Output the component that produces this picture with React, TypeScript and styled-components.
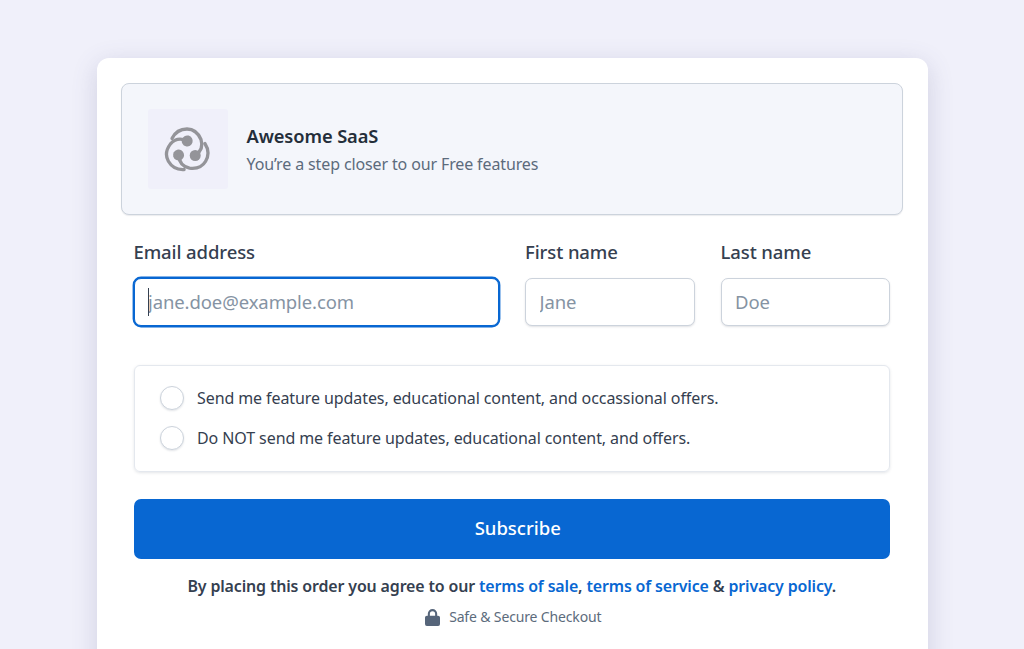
import React from "react";
import styled, { createGlobalStyle } from "styled-components";

const GlobalStyle = createGlobalStyle`
  html, body {
    margin: 0;
    padding: 0;
    height: 100%;
    overflow: hidden;
    background: #f0f0fa;
  }
  * {
    box-sizing: border-box;
  }
`;

const Page = styled.div`
  height: 649px;
  overflow: hidden;
  padding: 58px 96px 0 96.5px;
  background: #f0f0fa;
  font-family: "Noto Sans", "Open Sans", sans-serif;
`;

const Card = styled.main`
  height: 640px;
  padding: 24.5px 25px 0 24.5px;
  background: #fff;
  border-radius: 12px;
  box-shadow: 0 6px 26px rgba(80, 80, 130, 0.2);
`;

const Header = styled.header`
  display: flex;
  align-items: center;
  gap: 18.5px;
  height: 132.5px;
  padding: 0 26px;
  background: #f4f6fb;
  border: 1px solid #ccd3dc;
  border-radius: 8px;
  box-shadow: 0 1px 1px rgba(60, 70, 90, 0.1);
`;

const LogoBox = styled.div`
  display: flex;
  align-items: center;
  justify-content: center;
  width: 80px;
  height: 80px;
  background: #f0f0fa;
  border-radius: 3px;
`;

const Product = styled.div`
  display: flex;
  flex-direction: column;
  gap: 6px;
  padding-top: 3px;
`;

const ProductName = styled.h1`
  margin: 0;
  font-size: 18.3px;
  line-height: 22px;
  font-weight: 600;
  letter-spacing: -0.1px;
  color: #242e3a;
`;

const ProductNote = styled.p`
  margin: 0;
  font-size: 16px;
  line-height: 22px;
  letter-spacing: -0.13px;
  color: #5c6b7c;
`;

const Form = styled.form`
  display: flex;
  flex-direction: column;
  padding: 0 13px 0 12.5px;
`;

const Fields = styled.div`
  display: grid;
  grid-template-columns: 365.5px 169.5px 169.5px;
  column-gap: 26px;
  margin-top: 25px;
`;

const Field = styled.label`
  display: flex;
  flex-direction: column;
  gap: 14px;
`;

const FieldLabel = styled.span`
  font-size: 18.5px;
  line-height: 24px;
  font-weight: 500;
  letter-spacing: -0.1px;
  color: #354050;
`;

const InputWrap = styled.span`
  position: relative;
  display: block;
`;

const Input = styled.input<{ $focused?: boolean }>`
  display: block;
  width: 100%;
  height: 48px;
  padding: 0 13.5px 2px;
  font-family: inherit;
  font-size: 18.5px;
  letter-spacing: -0.1px;
  color: #354050;
  background: #fff;
  outline: none;
  border: 1px solid ${(p) => (p.$focused ? "#0867d2" : "#ccd3dc")};
  border-radius: 7px;
  box-shadow: ${(p) =>
    p.$focused ? "0 0 0 1.4px #0867d2" : "0 1px 2px rgba(60, 70, 90, 0.16)"};

  &::placeholder {
    color: #8593a3;
    opacity: 1;
  }
`;

const Caret = styled.i`
  position: absolute;
  left: 14px;
  top: 10px;
  width: 1.3px;
  height: 28px;
  background: #354050;
`;

const Options = styled.fieldset`
  display: flex;
  flex-direction: column;
  gap: 16px;
  height: 107px;
  margin: 39px 0 0;
  padding: 20px 25.5px 0;
  border: 1px solid #e4e8ee;
  border-radius: 6px;
  box-shadow: 0 1px 3px rgba(60, 70, 90, 0.14);
`;

const Option = styled.label`
  display: flex;
  align-items: center;
  gap: 13px;
  height: 24px;
  font-size: 16px;
  letter-spacing: -0.09px;
  color: #354050;
`;

const Radio = styled.input`
  appearance: none;
  flex: none;
  width: 24px;
  height: 24px;
  margin: 0;
  background: #fff;
  border: 1px solid #ccd3dc;
  border-radius: 50%;
  box-shadow: 0 1px 2px rgba(60, 70, 90, 0.14);
`;

const SubmitButton = styled.button`
  height: 60px;
  margin-top: 27px;
  padding: 0 0 3px 12px;
  font-family: inherit;
  font-size: 18.5px;
  font-weight: 500;
  color: #fff;
  background: #0867d2;
  border: none;
  border-radius: 7px;
`;

const Terms = styled.p`
  margin: 15px 0 0;
  text-align: center;
  font-size: 15.95px;
  line-height: 24px;
  font-weight: 600;
  letter-spacing: -0.14px;
  color: #354050;
`;

const TermsLink = styled.a`
  color: #0867d2;
  text-decoration: none;
`;

const Secure = styled.div`
  display: flex;
  align-items: center;
  justify-content: center;
  gap: 9px;
  margin-top: 8px;
  padding-left: 3px;
  font-size: 14px;
  line-height: 22px;
  letter-spacing: -0.15px;
  color: #5c6b7c;
`;

const Logo = () => (
  <svg width="48" height="48" viewBox="-23 -25.5 48 48" fill="none">
    {[0, 120, 240].map((a) => (
      <g key={a} transform={`rotate(${a})`}>
        <circle cx="8.2" cy="5" r="5.5" fill="#949499" />
        <path
          d="M8.2 5C14 1 16 -5 14 -11C11 -18 6 -21.5 0 -21.5C-7 -21.5 -12 -18 -15 -12"
          stroke="#949499"
          strokeWidth="3.3"
          strokeLinecap="round"
        />
      </g>
    ))}
  </svg>
);

const Lock = () => (
  <svg width="15" height="17" viewBox="0 0 16 18">
    <path
      d="M3 7V5a5 5 0 0 1 10 0v2h1a2 2 0 0 1 2 2v7a2 2 0 0 1-2 2H2a2 2 0 0 1-2-2V9a2 2 0 0 1 2-2h1zm2.2 0h5.6V5a2.8 2.8 0 0 0-5.6 0v2z"
      fill="#56657a"
    />
  </svg>
);

export default function App() {
  return (
    <>
      <GlobalStyle />
      <Page>
        <Card>
          <Header>
            <LogoBox>
              <Logo />
            </LogoBox>
            <Product>
              <ProductName>Awesome SaaS</ProductName>
              <ProductNote>You’re a step closer to our Free features</ProductNote>
            </Product>
          </Header>
          <Form onSubmit={(e) => e.preventDefault()}>
            <Fields>
              <Field>
                <FieldLabel>Email address</FieldLabel>
                <InputWrap>
                  <Input $focused placeholder="jane.doe@example.com" />
                  <Caret />
                </InputWrap>
              </Field>
              <Field>
                <FieldLabel>First name</FieldLabel>
                <Input placeholder="Jane" />
              </Field>
              <Field>
                <FieldLabel>Last name</FieldLabel>
                <Input placeholder="Doe" />
              </Field>
            </Fields>
            <Options>
              <Option>
                <Radio type="radio" name="updates" />
                Send me feature updates, educational content, and occassional offers.
              </Option>
              <Option>
                <Radio type="radio" name="updates" />
                Do NOT send me feature updates, educational content, and offers.
              </Option>
            </Options>
            <SubmitButton type="submit">Subscribe</SubmitButton>
            <Terms>
              By placing this order you agree to our <TermsLink href="#">terms of sale</TermsLink>,{" "}
              <TermsLink href="#">terms of service</TermsLink> &amp;{" "}
              <TermsLink href="#">privacy policy</TermsLink>.
            </Terms>
            <Secure>
              <Lock />
              Safe &amp; Secure Checkout
            </Secure>
          </Form>
        </Card>
      </Page>
    </>
  );
}
